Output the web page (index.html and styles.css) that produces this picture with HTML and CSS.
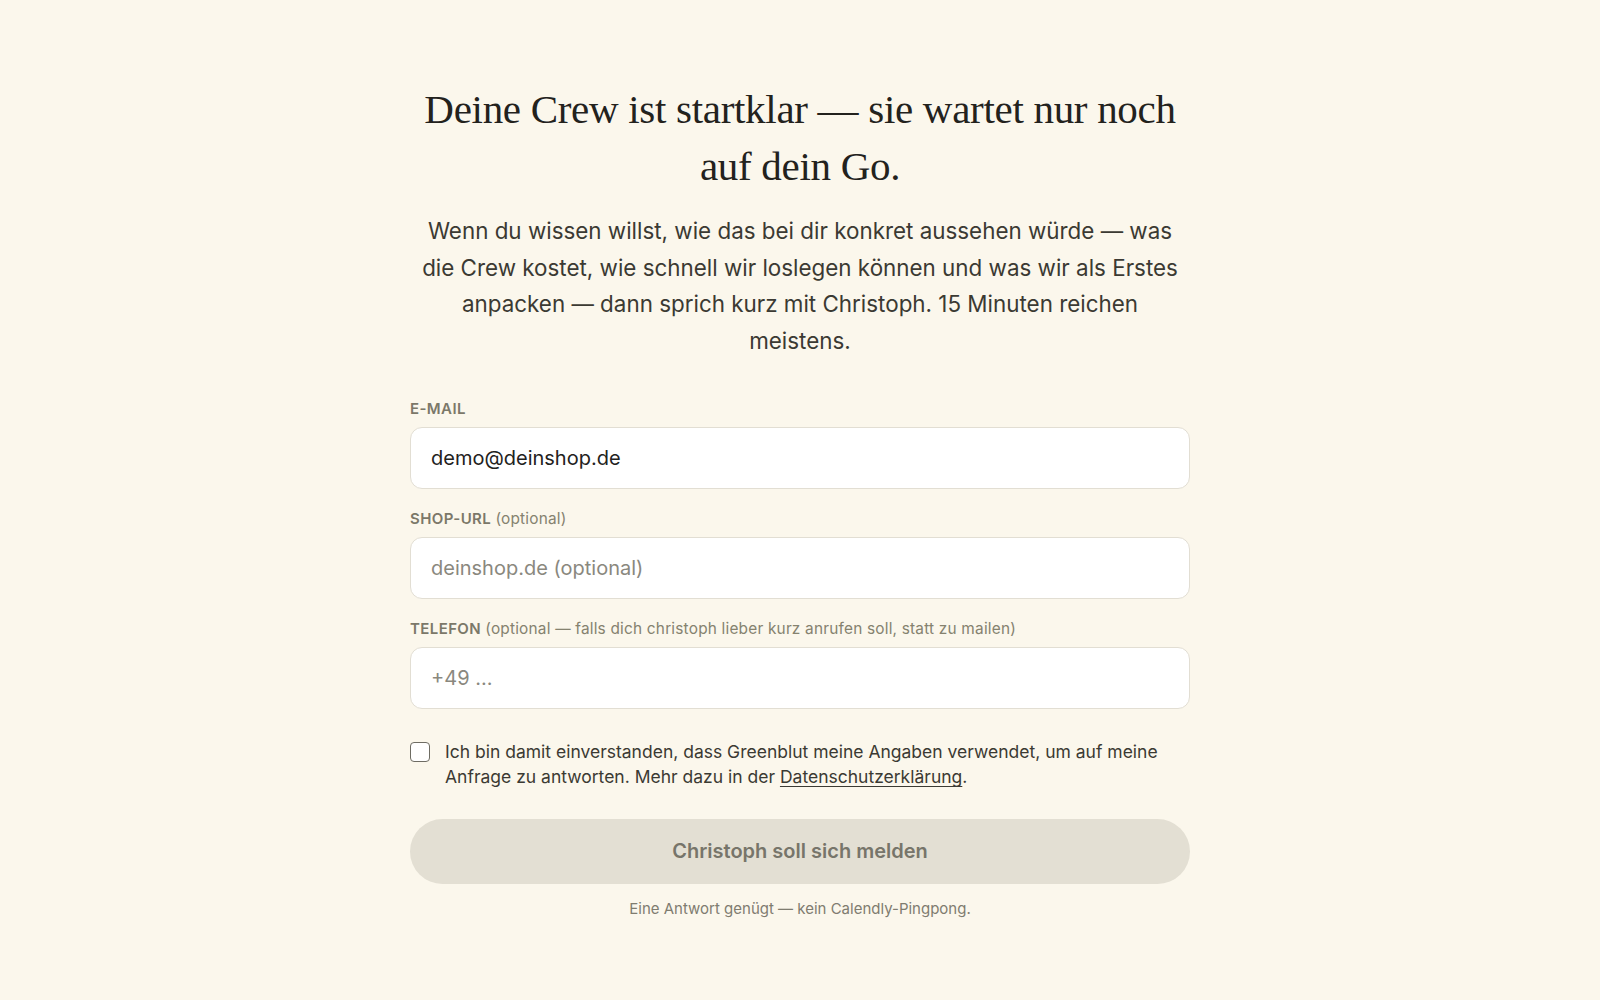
FILE: index.html
```html
<!DOCTYPE html>
<html lang="de">
<head>
<meta charset="utf-8">
<title>Greenblut</title>
<link rel="stylesheet" href="styles.css">
</head>
<body>
<main class="page">
  <section class="card">
    <h1 class="title">Deine Crew ist startklar — sie wartet nur noch auf dein Go.</h1>
    <p class="lead">Wenn du wissen willst, wie das bei dir konkret aussehen würde — was die Crew kostet, wie schnell wir loslegen können und was wir als Erstes anpacken — dann sprich kurz mit Christoph. 15 Minuten reichen meistens.</p>
    <form class="form">
      <div class="field">
        <label class="label" for="email">E-MAIL</label>
        <input class="input" id="email" type="email" value="demo@deinshop.de">
      </div>
      <div class="field">
        <label class="label" for="shop">SHOP-URL <span class="hint">(optional)</span></label>
        <input class="input" id="shop" type="text" placeholder="deinshop.de (optional)">
      </div>
      <div class="field">
        <label class="label" for="tel">TELEFON <span class="hint">(optional — falls dich christoph lieber kurz anrufen soll, statt zu mailen)</span></label>
        <input class="input" id="tel" type="tel" placeholder="+49 ...">
      </div>
      <label class="consent">
        <span class="box"></span>
        <span class="consent-text">Ich bin damit einverstanden, dass Greenblut meine Angaben verwendet, um auf meine Anfrage zu antworten. Mehr dazu in der <a class="link" href="#">Datenschutzerklärung</a>.</span>
      </label>
      <button class="submit" type="button">Christoph soll sich melden</button>
      <p class="note">Eine Antwort genügt — kein Calendly-Pingpong.</p>
    </form>
  </section>
</main>
</body>
</html>
```
FILE: styles.css
```css
* { box-sizing: border-box; }
html, body {
  margin: 0;
  padding: 0;
  background: #fbf7ec;
}
body {
  font-family: Inter, "Noto Sans", sans-serif;
  color: #2f2e28;
  min-height: 1000px;
}
.page {
  display: flex;
  justify-content: center;
  padding-top: 81px;
}
.card {
  width: 780px;
  display: flex;
  flex-direction: column;
}
.title {
  margin: 0 -4px;
  font-family: "Liberation Serif", "DejaVu Serif", serif;
  font-weight: 400;
  font-size: 41px;
  line-height: 57px;
  text-align: center;
  color: #23221d;
  letter-spacing: -0.3px;
}
.lead {
  margin: 18px 0 0;
  font-size: 22.4px;
  line-height: 36.7px;
  text-align: center;
  color: #3b3a33;
  padding: 0 3px;
}
.form {
  display: flex;
  flex-direction: column;
  margin-top: 40px;
}
.field {
  display: flex;
  flex-direction: column;
  gap: 9px;
  margin-bottom: 21px;
}
.label {
  font-size: 15px;
  line-height: 18px;
  font-weight: 600;
  letter-spacing: 0.4px;
  color: #7b7869;
}
.hint {
  font-weight: 400;
  font-size: 15.4px;
  letter-spacing: 0.2px;
  color: #85826f;
}
.input {
  height: 62px;
  border: 1.5px solid #e2ded3;
  border-radius: 12px;
  background: #ffffff;
  padding: 0 20px;
  font-family: Inter, "Noto Sans", sans-serif;
  font-size: 20px;
  color: #23221d;
  outline: none;
}
.input::placeholder {
  color: #8a887e;
}
.consent {
  display: flex;
  gap: 15px;
  align-items: flex-start;
  margin-top: 9px;
}
.box {
  flex: none;
  width: 20px;
  height: 20px;
  border: 1.5px solid #6e6c63;
  border-radius: 4px;
  background: #ffffff;
  margin-top: 3px;
}
.consent-text {
  font-size: 17.5px;
  line-height: 25.5px;
  color: #3b3a33;
}
.link {
  color: #3b3a33;
  text-decoration: underline;
  text-underline-offset: 3px;
}
.submit {
  margin-top: 29px;
  height: 65px;
  border: none;
  border-radius: 33px;
  background: #e3dfd3;
  color: #77756a;
  font-family: Inter, "Noto Sans", sans-serif;
  font-size: 20px;
  font-weight: 600;
}
.note {
  margin: 16px 0 0;
  text-align: center;
  font-size: 15px;
  line-height: 18px;
  color: #7f7c70;
}
```
